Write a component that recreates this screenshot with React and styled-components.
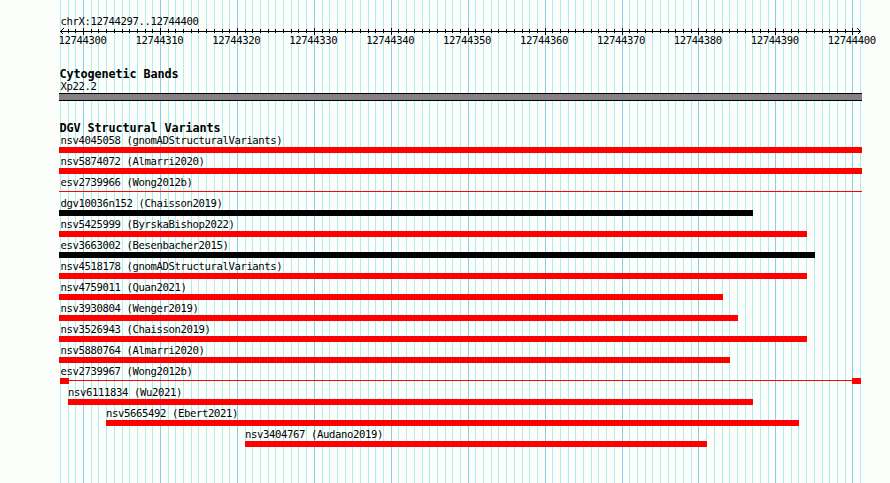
import React from "react";
import styled, { createGlobalStyle } from "styled-components";

const start = 12744297;
const end = 12744401;
const left = 60;
const scale = 800 / (end - start);

const toX = (pos) => Math.round(left + (pos - start) * scale);

const positions = [];
for (let i = start; i <= end; i++) {
  positions.push(i);
}

const isMajor = (pos) => pos % 10 === 0;

// from / to are pixel edges of the drawn glyph
const variants = [
  { name: "nsv4045058 (gnomADStructuralVariants)", from: 59, to: 862 },
  { name: "nsv5874072 (Almarri2020)", from: 59, to: 862 },
  { name: "esv2739966 (Wong2012b)", from: 59, to: 862, type: "line" },
  { name: "dgv10036n152 (Chaisson2019)", from: 59, to: 753, color: "#000" },
  { name: "nsv5425999 (ByrskaBishop2022)", from: 59, to: 807 },
  { name: "esv3663002 (Besenbacher2015)", from: 59, to: 815, color: "#000" },
  { name: "nsv4518178 (gnomADStructuralVariants)", from: 59, to: 807 },
  { name: "nsv4759011 (Quan2021)", from: 59, to: 723 },
  { name: "nsv3930804 (Wenger2019)", from: 59, to: 738 },
  { name: "nsv3526943 (Chaisson2019)", from: 59, to: 807 },
  { name: "nsv5880764 (Almarri2020)", from: 59, to: 730 },
  { name: "esv2739967 (Wong2012b)", from: 60, to: 861, type: "ends" },
  { name: "nsv6111834 (Wu2021)", from: 68, to: 753 },
  { name: "nsv5665492 (Ebert2021)", from: 106, to: 799 },
  { name: "nsv3404767 (Audano2019)", from: 245, to: 707 },
];

const GlobalStyle = createGlobalStyle`
  body {
    margin: 0;
    background: #fcfefc;
    overflow: hidden;
  }
`;

const Browser = styled.div`
  position: relative;
  width: 890px;
  height: 483px;
  color: #000;
  font: 10.6px/12px "DejaVu Sans Mono", "Liberation Mono", monospace;
  letter-spacing: -0.382px;
  white-space: pre;
`;

// grid lines run behind every track
const Grid = styled.svg`
  position: absolute;
  top: 0;
  left: 0;
`;

const Tracks = styled.div`
  position: relative;
  display: flex;
  flex-direction: column;
  padding-top: 15px;
`;

const Region = styled.div`
  height: 12px;
  padding-left: 60.5px;
`;

const Ruler = styled.svg`
  display: block;
  height: 8px;
`;

const Scale = styled.div`
  display: flex;
  height: 11px;
  padding-left: 44px;
  line-height: 11px;
`;

const ScaleLabel = styled.span`
  flex: 0 0 ${(props) => props.$width}px;
  text-align: center;
`;

const Heading = styled.h2`
  height: 12px;
  margin: 0;
  padding-left: 59.5px;
  font-size: 11.8px;
  line-height: 12px;
  font-weight: bold;
  letter-spacing: -0.104px;
`;

const Section = styled.section`
  margin-top: ${(props) => props.$gap}px;
`;

const BandLabel = styled.div`
  height: 13px;
  padding-left: 60.5px;
`;

const Band = styled.div`
  width: 803px;
  height: 8px;
  margin-left: 59px;
  box-sizing: border-box;
  border: solid #000;
  border-width: 1px 0;
  background: #848084;
`;

const Row = styled.div`
  height: 21px;
  padding-left: ${(props) => props.$from}px;
`;

const RowLabel = styled.div`
  height: 13px;
  line-height: 13px;
  padding-left: ${(props) => props.$indent}px;
`;

const Bar = styled.div`
  width: ${(props) => props.$width}px;
  height: 6px;
  background: ${(props) => props.$color};
`;

const Thin = styled.div`
  width: ${(props) => props.$width}px;
  height: 1px;
  margin-top: 2px;
  background: #fc0204;
`;

// keeps the thin line's top margin inside the row
const Joined = styled.div`
  display: flex;
`;

const Variant = ({ name, from, to, type, color = "#ff0000" }) => {
  const width = to - from;
  return (
    <Row $from={from}>
      <RowLabel $indent={from <= left ? 60.5 - from : 0}>{name}</RowLabel>
      {type === "line" ? (
        <Thin $width={width} />
      ) : type === "ends" ? (
        <Joined>
          <Bar $width={9} $color={color} />
          <Thin $width={width - 18} />
          <Bar $width={9} $color={color} />
        </Joined>
      ) : (
        <Bar $width={width} $color={color} />
      )}
    </Row>
  );
};

function App() {
  const majors = positions.filter(isMajor);

  return (
    <Browser>
      <GlobalStyle />
      <Grid width="890" height="483" shapeRendering="crispEdges">
        {positions.map((pos) => (
          <rect
            key={pos}
            x={toX(pos)}
            y="0"
            width="1"
            height="483"
            fill={isMajor(pos) ? "#87ceeb" : "#afeeee"}
          />
        ))}
      </Grid>
      <Tracks>
        <Region>chrX:12744297..12744400</Region>
        <Ruler width="890" height="8" shapeRendering="crispEdges">
          <rect x="60" y="4" width="801" height="1" />
          {positions.slice(1, -1).map((pos) => (
            <rect
              key={pos}
              x={toX(pos)}
              y={isMajor(pos) ? 1 : 2}
              width="1"
              height={isMajor(pos) ? 7 : 4}
            />
          ))}
          <path d="M63.5 1.5L60.5 4.5L63.5 7.5M857.5 1.5L860.5 4.5L857.5 7.5" fill="none" stroke="#000" />
        </Ruler>
        <Scale>
          {majors.map((pos) => (
            <ScaleLabel key={pos} $width={scale * 10}>
              {pos}
            </ScaleLabel>
          ))}
        </Scale>
        <Section $gap={22}>
          <Heading>Cytogenetic Bands</Heading>
          <BandLabel>Xp22.2</BandLabel>
          <Band />
        </Section>
        <Section $gap={21}>
          <Heading>DGV Structural Variants</Heading>
          {variants.map((v) => (
            <Variant key={v.name} {...v} />
          ))}
        </Section>
      </Tracks>
    </Browser>
  );
}

export default App;
